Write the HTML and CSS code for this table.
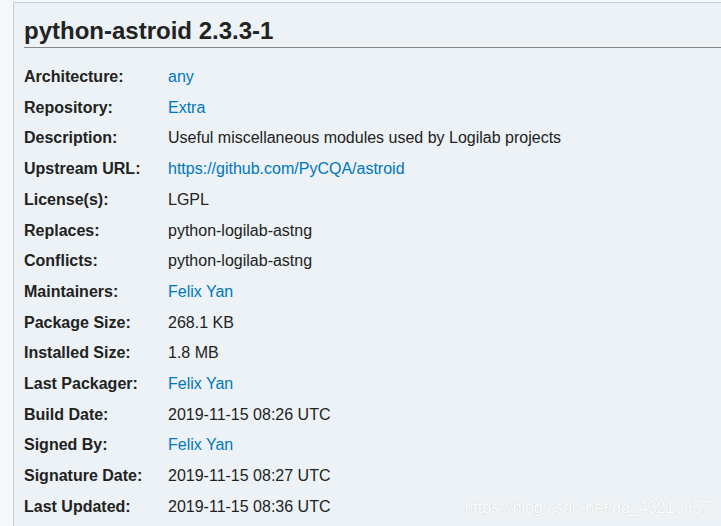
FILE: index.html
```html
<!DOCTYPE html>
<html>
<head>
<meta charset="utf-8">
<link rel="stylesheet" href="styles.css">
</head>
<body>
<div class="box">
  <h2 class="title">python-astroid 2.3.3-1</h2>
  <div class="details">
    <div class="label">Architecture:</div><div class="val"><a class="link">any</a></div>
    <div class="label">Repository:</div><div class="val"><a class="link">Extra</a></div>
    <div class="label">Description:</div><div class="val">Useful miscellaneous modules used by Logilab projects</div>
    <div class="label">Upstream URL:</div><div class="val"><a class="link">https://github.com/PyCQA/astroid</a></div>
    <div class="label">License(s):</div><div class="val">LGPL</div>
    <div class="label">Replaces:</div><div class="val">python-logilab-astng</div>
    <div class="label">Conflicts:</div><div class="val">python-logilab-astng</div>
    <div class="label">Maintainers:</div><div class="val"><a class="link">Felix Yan</a></div>
    <div class="label">Package Size:</div><div class="val">268.1 KB</div>
    <div class="label">Installed Size:</div><div class="val">1.8 MB</div>
    <div class="label">Last Packager:</div><div class="val"><a class="link">Felix Yan</a></div>
    <div class="label">Build Date:</div><div class="val">2019-11-15 08:26 UTC</div>
    <div class="label">Signed By:</div><div class="val"><a class="link">Felix Yan</a></div>
    <div class="label">Signature Date:</div><div class="val">2019-11-15 08:27 UTC</div>
    <div class="label">Last Updated:</div><div class="val">2019-11-15 08:36 UTC</div>
  </div>
</div>
<div class="watermark">https://blog.csdn.net/qq_43210957</div>
</body>
</html>
```
FILE: styles.css
```css
html, body {
  margin: 0;
  padding: 0;
  width: 721px;
  height: 526px;
  overflow: hidden;
  background: #f6f9fc;
  font-family: "Liberation Sans", Arial, sans-serif;
  color: #222;
  position: relative;
}
.box {
  margin: 2px 0 0 13px;
  width: 708px;
  height: 524px;
  border-top: 1px solid #bcd0e0;
  border-left: 1px solid #bcd0e0;
  background: #ecf2f5;
  padding: 0 0 0 10px;
  box-sizing: border-box;
  overflow: hidden;
}
.title {
  margin: 14px 0 0 0;
  padding: 0 0 2px 0;
  font-size: 24px;
  line-height: 28px;
  font-weight: bold;
  border-bottom: 1px solid #888;
}
.details {
  margin-top: 14px;
  display: grid;
  grid-template-columns: 144px auto;
  grid-auto-rows: 30.71px;
  font-size: 16px;
  line-height: 30.71px;
}
.label {
  font-weight: bold;
}
.link {
  color: #07b;
  text-decoration: none;
}
.watermark {
  position: absolute;
  right: 11px;
  bottom: 9px;
  font-size: 16px;
  line-height: 18px;
  color: #fff;
  text-shadow: 0 0 1px rgba(0,0,0,0.2);
}
```
